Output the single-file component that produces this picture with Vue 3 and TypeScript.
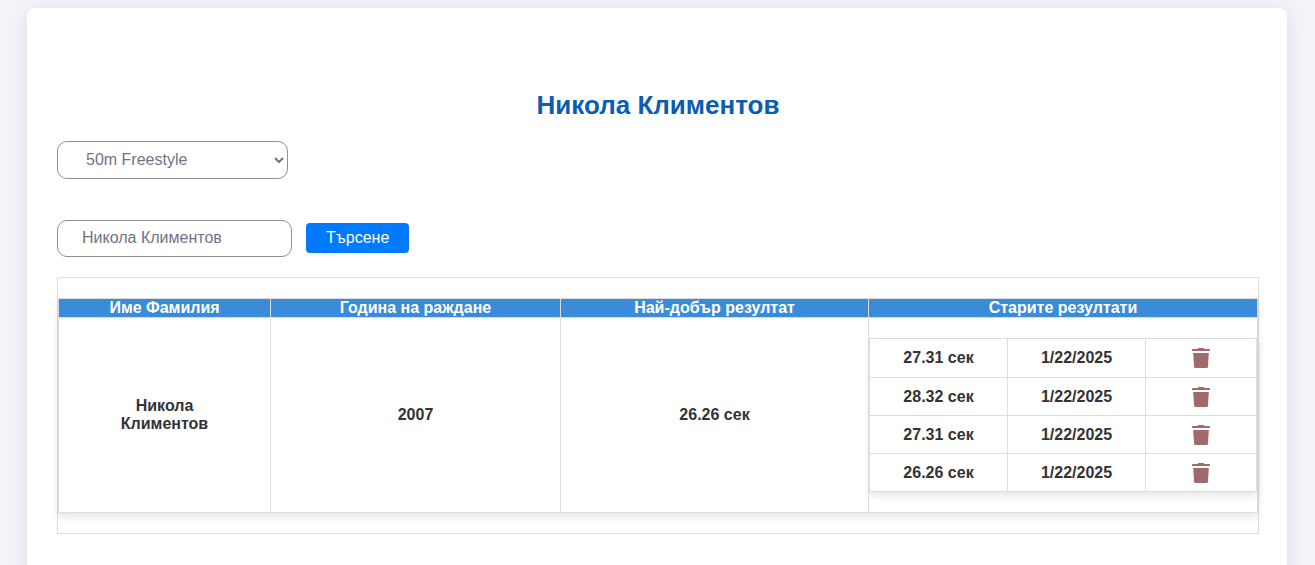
<script setup lang="ts">
import { ref } from 'vue'

interface Result {
  id: number
  time: string
  date: string
}

interface Swimmer {
  name: string
  birthYear: number
  best: string
  results: Result[]
}

const disciplines: string[] = ['50m Freestyle', '100m Freestyle', '200m Freestyle', '50m Backstroke', '50m Butterfly']
const discipline = ref<string>('50m Freestyle')
const query = ref<string>('Никола Климентов')

const swimmer = ref<Swimmer>({
  name: 'Никола Климентов',
  birthYear: 2007,
  best: '26.26 сек',
  results: [
    { id: 1, time: '27.31 сек', date: '1/22/2025' },
    { id: 2, time: '28.32 сек', date: '1/22/2025' },
    { id: 3, time: '27.31 сек', date: '1/22/2025' },
    { id: 4, time: '26.26 сек', date: '1/22/2025' },
  ],
})

function removeResult(id: number): void {
  swimmer.value.results = swimmer.value.results.filter((r) => r.id !== id)
}
</script>

<template>
  <div class="page">
    <main class="card">
      <h1 class="title">{{ swimmer.name }}</h1>

      <select v-model="discipline" class="field discipline" aria-label="Дисциплина">
        <option v-for="d in disciplines" :key="d" :value="d">{{ d }}</option>
      </select>

      <form class="search" @submit.prevent>
        <input v-model="query" class="field query" type="text" aria-label="Име Фамилия" />
        <button class="search-button" type="submit">Търсене</button>
      </form>

      <section class="table-box">
        <table class="main-table">
          <colgroup>
            <col class="col-name" />
            <col class="col-year" />
            <col class="col-best" />
            <col class="col-old" />
          </colgroup>
          <thead>
            <tr>
              <th>Име Фамилия</th>
              <th>Година на раждане</th>
              <th>Най-добър резултат</th>
              <th>Старите резултати</th>
            </tr>
          </thead>
          <tbody>
            <tr>
              <td class="name">{{ swimmer.name }}</td>
              <td>{{ swimmer.birthYear }}</td>
              <td>{{ swimmer.best }}</td>
              <td>
                <table class="old-table">
                  <colgroup>
                    <col class="col-time" />
                    <col class="col-date" />
                    <col />
                  </colgroup>
                  <tbody>
                    <tr v-for="r in swimmer.results" :key="r.id">
                      <td>{{ r.time }}</td>
                      <td>{{ r.date }}</td>
                      <td>
                        <button class="delete" type="button" aria-label="Изтриване" @click="removeResult(r.id)">
                          <svg width="18" height="20" viewBox="0 0 18 20" aria-hidden="true">
                            <path d="M5.5 1 Q5.8 0 7 0 H11 Q12.2 0 12.5 1 H17.3 Q18 1 18 1.8 V3 H0 V1.8 Q0 1 0.7 1 Z" />
                            <path d="M1.2 5 H16.8 L16 18.4 Q15.9 20 14.3 20 H3.7 Q2.1 20 2 18.4 Z" />
                          </svg>
                        </button>
                      </td>
                    </tr>
                  </tbody>
                </table>
              </td>
            </tr>
          </tbody>
        </table>
      </section>
    </main>
  </div>
</template>

<style>
body {
  margin: 0;
  background: #f4f3f9;
}
</style>

<style scoped>
.page {
  padding: 8px 28px 0 27px;
}

.card {
  box-sizing: border-box;
  max-width: 1260px;
  margin: 0 auto;
  padding: 81px 28px 60px 30px;
  border-radius: 8px;
  background: #fff;
  box-shadow: 0 4px 20px rgba(0, 0, 0, 0.1);
  color: #333;
  font: 16px/18px "Liberation Sans", Arial, sans-serif;
}

.title {
  margin: 0 0 20px;
  color: #0b5cb3;
  font-size: 26px;
  line-height: 32px;
  text-align: center;
}

.field {
  box-sizing: border-box;
  border: 1px solid #909090;
  border-radius: 10px;
  background: #fff;
  color: #757185;
  font: inherit;
}

.discipline {
  display: block;
  width: 231px;
  height: 38px;
  padding: 0 0 2px 24px;
}

.search {
  display: flex;
  align-items: center;
  gap: 14px;
  margin: 41px 0 20px;
}

.query {
  width: 235px;
  height: 37px;
  padding: 0 24px 2px;
}

.search-button {
  height: 30px;
  margin-bottom: 2px;
  padding: 0 20px;
  border: 0;
  border-radius: 4px;
  background: #007bff;
  color: #fff;
  font: inherit;
  cursor: pointer;
}

.table-box {
  padding: 20px 0;
  border: 1px solid #ddd;
}

table {
  width: 100%;
  border-collapse: collapse;
  table-layout: fixed;
  box-shadow: 0 4px 8px rgba(0, 0, 0, 0.1);
}

th,
td {
  padding: 0;
  border: 1px solid #ddd;
  font-weight: bold;
  text-align: center;
}

th {
  background: #3b8bdb;
  color: #fff;
}

.col-name {
  width: 212px;
}

.col-year {
  width: 290px;
}

.col-best {
  width: 308px;
}

.name {
  padding: 0 40px;
}

.old-table {
  margin: 20px 0;
}

.old-table td {
  height: 37px;
}

.old-table tr:first-child td {
  height: 38px;
}

.col-time,
.col-date {
  width: 138px;
}

.delete {
  display: block;
  margin: 0 auto;
  padding: 0;
  border: 0;
  background: none;
  cursor: pointer;
}

.delete svg {
  display: block;
  fill: #a06a6a;
}
</style>
